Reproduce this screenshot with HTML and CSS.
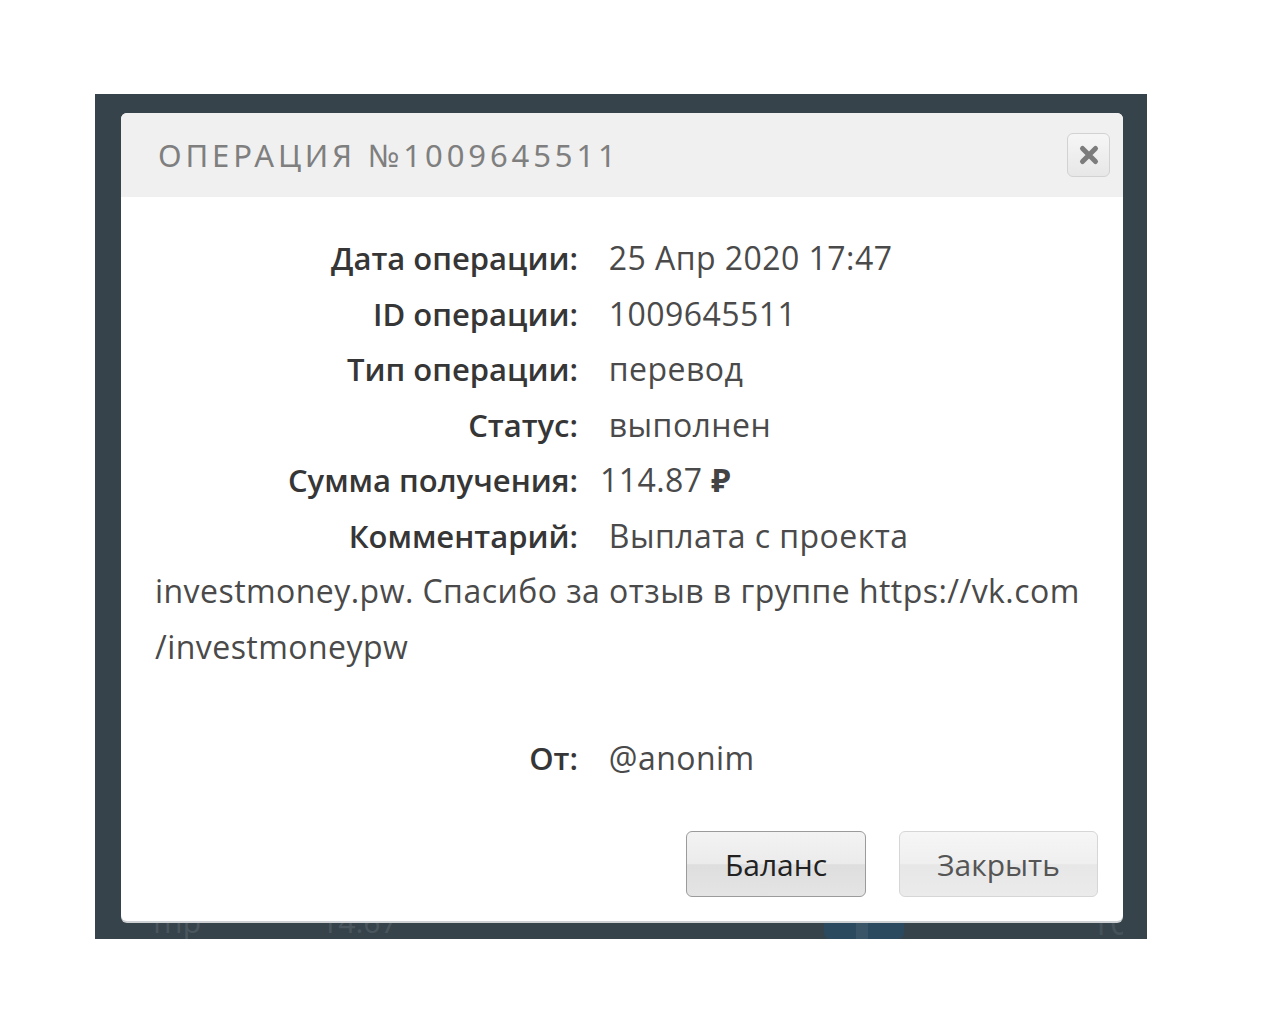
FILE: index.html
```html
<!DOCTYPE html>
<html lang="ru">
<head>
<meta charset="UTF-8">
<meta name="viewport" content="width=device-width, initial-scale=1.0">
<title>Операция №1009645511</title>
<link rel="stylesheet" href="styles.css">
</head>
<body>

<div class="backdrop">
  <div class="dialog">
    <div class="dialog-head">
      <h2 class="dialog-title">Операция №1009645511</h2>
      <button class="close-btn" type="button" aria-label="Закрыть">
        <svg width="22" height="22" viewBox="0 0 22 22">
          <path d="M4.5 4.5 L17.5 17.5 M17.5 4.5 L4.5 17.5" stroke="#7c7c7c" stroke-width="5" stroke-linecap="round"/>
        </svg>
      </button>
    </div>

    <div class="dialog-body">
      <div class="row"><span class="label">Дата операции:</span> <span class="value">25 Апр 2020 17:47</span></div>
      <div class="row"><span class="label">ID операции:</span> <span class="value">1009645511</span></div>
      <div class="row"><span class="label">Тип операции:</span> <span class="value">перевод</span></div>
      <div class="row"><span class="label">Статус:</span> <span class="value">выполнен</span></div>
      <div class="row"><span class="label">Сумма получения:</span><span class="value">114.87 <b class="rub">₽</b></span></div>
      <div class="row"><span class="label">Комментарий:</span> <span class="value">Выплата с проекта investmoney.pw. Спасибо за отзыв в группе https://vk.com<wbr>/investmoneypw</span></div>
      <div class="row">&nbsp;</div>
      <div class="row"><span class="label">От:</span> <span class="value">@anonim</span></div>

      <div class="actions">
        <button class="btn btn-balance" type="button">Баланс</button>
        <button class="btn btn-close" type="button">Закрыть</button>
      </div>
    </div>
  </div>

  <!-- rows of the page under the overlay -->
  <div class="under">
    <span class="under-a">тпр</span>
    <span class="under-b">14.67</span>
    <span class="under-c"><i></i></span>
    <span class="under-d">10</span>
  </div>
</div>

</body>
</html>
```

FILE: styles.css
```css
body { margin: 0; background-color: #fff; font-family: 'Open Sans', 'Noto Sans', sans-serif; }

.backdrop {
  width: 1052px;
  margin: 94px 0 0 95px;
  padding: 19px 24px 0 26px;
  box-sizing: border-box;
  background-color: #37434a;
  overflow: hidden;
}

.dialog {
  position: relative;
  z-index: 2;
  background-color: #fff;
  border-radius: 6px;
  box-shadow: 0 2px 0 #cdd1d3;
}

.dialog-head {
  height: 84px;
  display: flex;
  align-items: center;
  justify-content: space-between;
  padding: 0 13px 0 37px;
  background-color: #f0f0f0;
  border-radius: 6px 6px 0 0;
}
.dialog-title {
  margin: 0;
  font-family: 'Noto Sans', sans-serif;
  font-weight: 400;
  font-size: 31px;
  letter-spacing: 3.9px;
  text-transform: uppercase;
  color: #7f7f7f;
}

.close-btn {
  width: 43px;
  height: 44px;
  padding: 0;
  display: flex;
  align-items: center;
  justify-content: center;
  border: 1px solid #d2d2d2;
  border-radius: 6px;
  background: linear-gradient(#f6f6f6, #e7e7e7);
  cursor: pointer;
}

.dialog-body {
  padding: 33px 25px 24px 34px;
  font-size: 32px;
  letter-spacing: 0.45px;
  line-height: 55.5px;
  color: #4a4a4a;
}
.row { padding-right: 8px; }
.label {
  display: inline-block;
  width: 445px;
  padding-right: 22px;
  box-sizing: border-box;
  text-align: right;
  font-size: 31px;
  line-height: 40px;
  letter-spacing: 0;
  font-weight: 600;
  color: #363636;
}
.rub { font-weight: 700; color: #444; }

.actions {
  display: flex;
  justify-content: flex-end;
  gap: 33px;
  margin-top: 46px;
}
.btn {
  height: 66px;
  font-family: 'Open Sans', sans-serif;
  font-size: 30px;
  border-radius: 6px;
  cursor: pointer;
}
.btn-balance {
  width: 180px;
  color: #222;
  border: 1px solid #9b9b9b;
  background: linear-gradient(#f3f3f3 0%, #ebebeb 50%, #dedede 51%, #e4e4e4 100%);
}
.btn-close {
  width: 199px;
  color: #555;
  border: 1px solid #d6d6d6;
  background: linear-gradient(#f6f6f6 0%, #efefef 50%, #e7e7e7 51%, #ebebeb 100%);
}

.under {
  height: 18px;
  display: flex;
  align-items: flex-start;
  overflow: hidden;
  color: #4a565e;
  font-size: 30px;
  line-height: 30px;
}
.under span { margin-top: -14px; }
.under-a { margin-left: 29px; }
.under-b { margin-left: 120px; }
.under-c { margin-left: 426px; }
.under-c i {
  display: block;
  width: 80px;
  height: 32px;
  border-radius: 6px;
  background: linear-gradient(90deg, #2c4a5f 40%, #3a5567 40%, #3a5567 55%, #2c4a5f 55%);
}
.under-d { margin-left: 187px; color: #45525a; font-size: 34px; }
```
